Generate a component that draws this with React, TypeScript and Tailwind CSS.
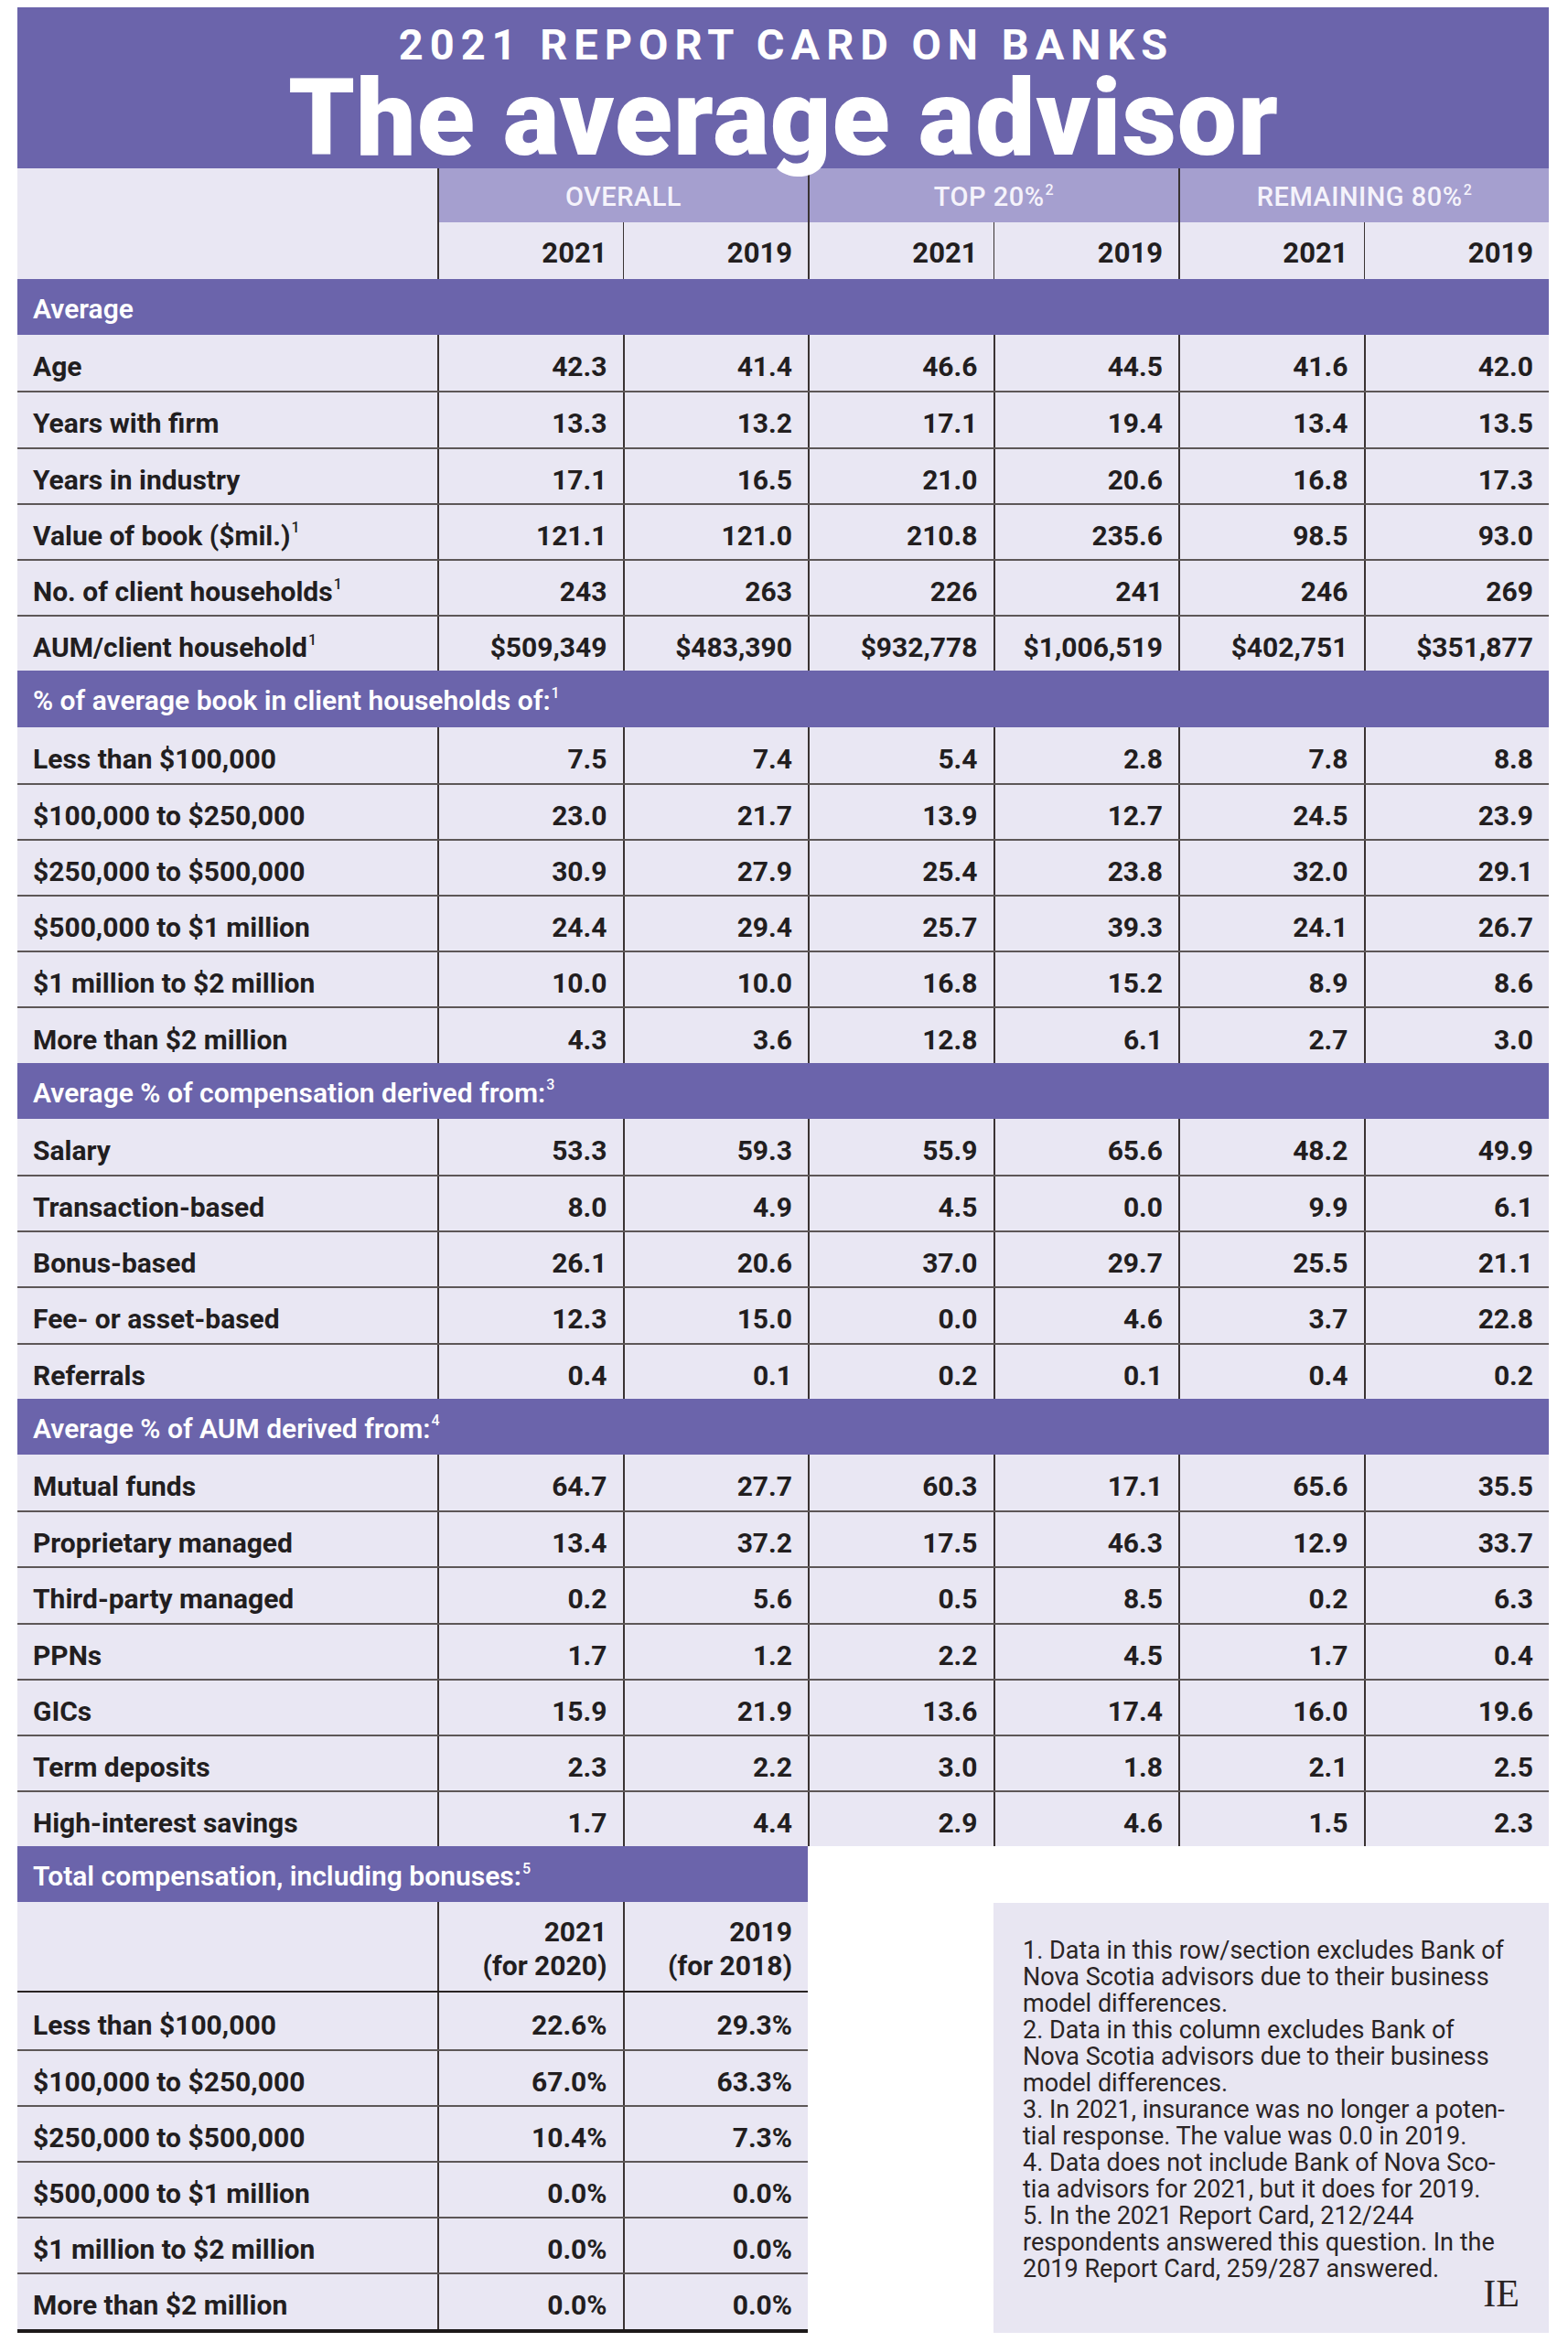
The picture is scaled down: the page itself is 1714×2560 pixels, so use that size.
import React from "react";

type Row = { label: string; sup?: string; values: string[] };

const averageRows: Row[] = [
  { label: "Age", values: ["42.3", "41.4", "46.6", "44.5", "41.6", "42.0"] },
  { label: "Years with firm", values: ["13.3", "13.2", "17.1", "19.4", "13.4", "13.5"] },
  { label: "Years in industry", values: ["17.1", "16.5", "21.0", "20.6", "16.8", "17.3"] },
  { label: "Value of book ($mil.)", sup: "1", values: ["121.1", "121.0", "210.8", "235.6", "98.5", "93.0"] },
  { label: "No. of client households", sup: "1", values: ["243", "263", "226", "241", "246", "269"] },
  {
    label: "AUM/client household",
    sup: "1",
    values: ["$509,349", "$483,390", "$932,778", "$1,006,519", "$402,751", "$351,877"],
  },
];

const bookRows: Row[] = [
  { label: "Less than $100,000", values: ["7.5", "7.4", "5.4", "2.8", "7.8", "8.8"] },
  { label: "$100,000 to $250,000", values: ["23.0", "21.7", "13.9", "12.7", "24.5", "23.9"] },
  { label: "$250,000 to $500,000", values: ["30.9", "27.9", "25.4", "23.8", "32.0", "29.1"] },
  { label: "$500,000 to $1 million", values: ["24.4", "29.4", "25.7", "39.3", "24.1", "26.7"] },
  { label: "$1 million to $2 million", values: ["10.0", "10.0", "16.8", "15.2", "8.9", "8.6"] },
  { label: "More than $2 million", values: ["4.3", "3.6", "12.8", "6.1", "2.7", "3.0"] },
];

const compRows: Row[] = [
  { label: "Salary", values: ["53.3", "59.3", "55.9", "65.6", "48.2", "49.9"] },
  { label: "Transaction-based", values: ["8.0", "4.9", "4.5", "0.0", "9.9", "6.1"] },
  { label: "Bonus-based", values: ["26.1", "20.6", "37.0", "29.7", "25.5", "21.1"] },
  { label: "Fee- or asset-based", values: ["12.3", "15.0", "0.0", "4.6", "3.7", "22.8"] },
  { label: "Referrals", values: ["0.4", "0.1", "0.2", "0.1", "0.4", "0.2"] },
];

const aumRows: Row[] = [
  { label: "Mutual funds", values: ["64.7", "27.7", "60.3", "17.1", "65.6", "35.5"] },
  { label: "Proprietary managed", values: ["13.4", "37.2", "17.5", "46.3", "12.9", "33.7"] },
  { label: "Third-party managed", values: ["0.2", "5.6", "0.5", "8.5", "0.2", "6.3"] },
  { label: "PPNs", values: ["1.7", "1.2", "2.2", "4.5", "1.7", "0.4"] },
  { label: "GICs", values: ["15.9", "21.9", "13.6", "17.4", "16.0", "19.6"] },
  { label: "Term deposits", values: ["2.3", "2.2", "3.0", "1.8", "2.1", "2.5"] },
  { label: "High-interest savings", values: ["1.7", "4.4", "2.9", "4.6", "1.5", "2.3"] },
];

const totalRows: Row[] = [
  { label: "Less than $100,000", values: ["22.6%", "29.3%"] },
  { label: "$100,000 to $250,000", values: ["67.0%", "63.3%"] },
  { label: "$250,000 to $500,000", values: ["10.4%", "7.3%"] },
  { label: "$500,000 to $1 million", values: ["0.0%", "0.0%"] },
  { label: "$1 million to $2 million", values: ["0.0%", "0.0%"] },
  { label: "More than $2 million", values: ["0.0%", "0.0%"] },
];

const notes = [
  "1. Data in this row/section excludes Bank of",
  "Nova Scotia advisors due to their business",
  "model differences.",
  "2. Data in this column excludes Bank of",
  "Nova Scotia advisors due to their business",
  "model differences.",
  "3. In 2021, insurance was no longer a poten-",
  "tial response. The value was 0.0 in 2019.",
  "4. Data does not include Bank of Nova Sco-",
  "tia advisors for 2021, but it does for 2019.",
  "5. In the 2021 Report Card, 212/244",
  "respondents answered this question. In the",
  "2019 Report Card, 259/287 answered.",
];

function Sup({ children }: { children: React.ReactNode }) {
  return <sup className="ml-[1px] text-[16px] font-medium">{children}</sup>;
}

function SectionHeader({ title, sup }: { title: string; sup?: string }) {
  return (
    <div className="flex h-[61.2px] items-center bg-[#6b64ab] pt-[4px] pl-[17px] text-[30px] font-semibold text-white">
      {title}
      {sup ? <Sup>{sup}</Sup> : null}
    </div>
  );
}

function DataRow({ row, first, cols }: { row: Row; first: boolean; cols: 6 | 2 }) {
  return (
    <div
      className={`grid h-[61.2px] ${
        cols === 6 ? "grid-cols-[459px_repeat(6,minmax(0,1fr))]" : "grid-cols-[459px_repeat(2,minmax(0,1fr))]"
      } ${first ? "" : "border-t-2 border-[#5d5757]"}`}
    >
      <div className="flex items-center pl-[17px] pt-[8px] text-[30px] font-bold text-[#221e1f]">
        {row.label}
        {row.sup ? <Sup>{row.sup}</Sup> : null}
      </div>
      {row.values.map((v, i) => (
        <div
          key={i}
          className="flex items-center justify-end border-l-2 border-[#3a3333] pr-[17px] pt-[8px] text-[30px] font-bold text-[#221e1f]"
        >
          {v}
        </div>
      ))}
    </div>
  );
}

function Section({ title, sup, rows }: { title: string; sup?: string; rows: Row[] }) {
  return (
    <>
      <SectionHeader title={title} sup={sup} />
      {rows.map((r, i) => (
        <DataRow key={r.label} row={r} first={i === 0} cols={6} />
      ))}
    </>
  );
}

export default function App() {
  const groups = [
    { name: "OVERALL" },
    { name: "TOP 20%", sup: "2" },
    { name: "REMAINING 80%", sup: "2" },
  ];
  const years = ["2021", "2019", "2021", "2019", "2021", "2019"];

  return (
    <div className="w-[1714px] bg-white pt-[8px] pb-[10px] font-['Roboto','Liberation_Sans',sans-serif]">
      <div className="ml-[19px] w-[1674px] bg-[#e9e7f3]">
        {/* title block */}
        <div className="relative z-10 flex h-[176px] flex-col items-center bg-[#6b64ab] text-white">
          <div className="mt-[21px] pl-[7px] text-[47px] leading-[40px] font-bold tracking-[7px]">
            2021 REPORT CARD ON BANKS
          </div>
          <div className="mt-[5px] pl-[1px] text-[116px] leading-[110px] font-black tracking-[1px]">
            The average advisor
          </div>
        </div>

        {/* column headers */}
        <div className="grid grid-cols-[459px_repeat(6,minmax(0,1fr))] grid-rows-[59px_62px]">
          <div className="row-span-2 bg-[#e9e7f3]" />
          {groups.map((g) => (
            <div
              key={g.name}
              className="col-span-2 flex items-center justify-center border-l-2 border-[#3a3333] bg-[#a59fcf] pt-[5px] text-[29px] font-medium tracking-[0.5px] text-[#f5f3fb]"
            >
              {g.name}
              {g.sup ? <Sup>{g.sup}</Sup> : null}
            </div>
          ))}
          {years.map((y, i) => (
            <div
              key={i}
              className={`flex items-center justify-end pr-[17px] pt-[6px] text-[31px] font-bold text-[#221e1f] ${
                i % 2 === 0 ? "border-l-2 border-[#3a3333]" : "border-l border-[#3a3333]"
              }`}
            >
              {y}
            </div>
          ))}
        </div>

        <Section title="Average" rows={averageRows} />
        <Section title="% of average book in client households of:" sup="1" rows={bookRows} />
        <Section title="Average % of compensation derived from:" sup="3" rows={compRows} />
        <Section title="Average % of AUM derived from:" sup="4" rows={aumRows} />
      </div>

      {/* bottom: total compensation + notes */}
      <div className="ml-[19px] flex w-[1674px]">
        <div className="w-[864px] border-b-4 border-[#1d1919] bg-[#e9e7f3]">
          <SectionHeader title="Total compensation, including bonuses:" sup="5" />
          <div className="grid h-[99px] grid-cols-[459px_repeat(2,minmax(0,1fr))] border-b-2 border-[#2a2424]">
            <div />
            {[
              ["2021", "(for 2020)"],
              ["2019", "(for 2018)"],
            ].map(([a, b]) => (
              <div
                key={a}
                className="flex flex-col items-end justify-center border-l-2 border-[#3a3333] pr-[17px] pt-[4px] text-[30px] leading-[37px] font-bold text-[#221e1f]"
              >
                <span>{a}</span>
                <span>{b}</span>
              </div>
            ))}
          </div>
          {totalRows.map((r, i) => (
            <DataRow key={r.label} row={r} first={i === 0} cols={2} />
          ))}
        </div>

        <div className="flex flex-1 flex-col pt-[62px] pl-[203px]">
          <div className="relative flex-1 bg-[#e8e6f2] pt-[38px] pl-[32px] text-[27px] leading-[29px] text-[#2a2424]">
            {notes.map((n, i) => (
              <div key={i} className="whitespace-nowrap">
                {n}
              </div>
            ))}
            <div className="absolute right-[32px] bottom-[22px] font-['Liberation_Serif',serif] text-[42px] leading-none text-[#2a2424]">
              IE
            </div>
          </div>
        </div>
      </div>
    </div>
  );
}
